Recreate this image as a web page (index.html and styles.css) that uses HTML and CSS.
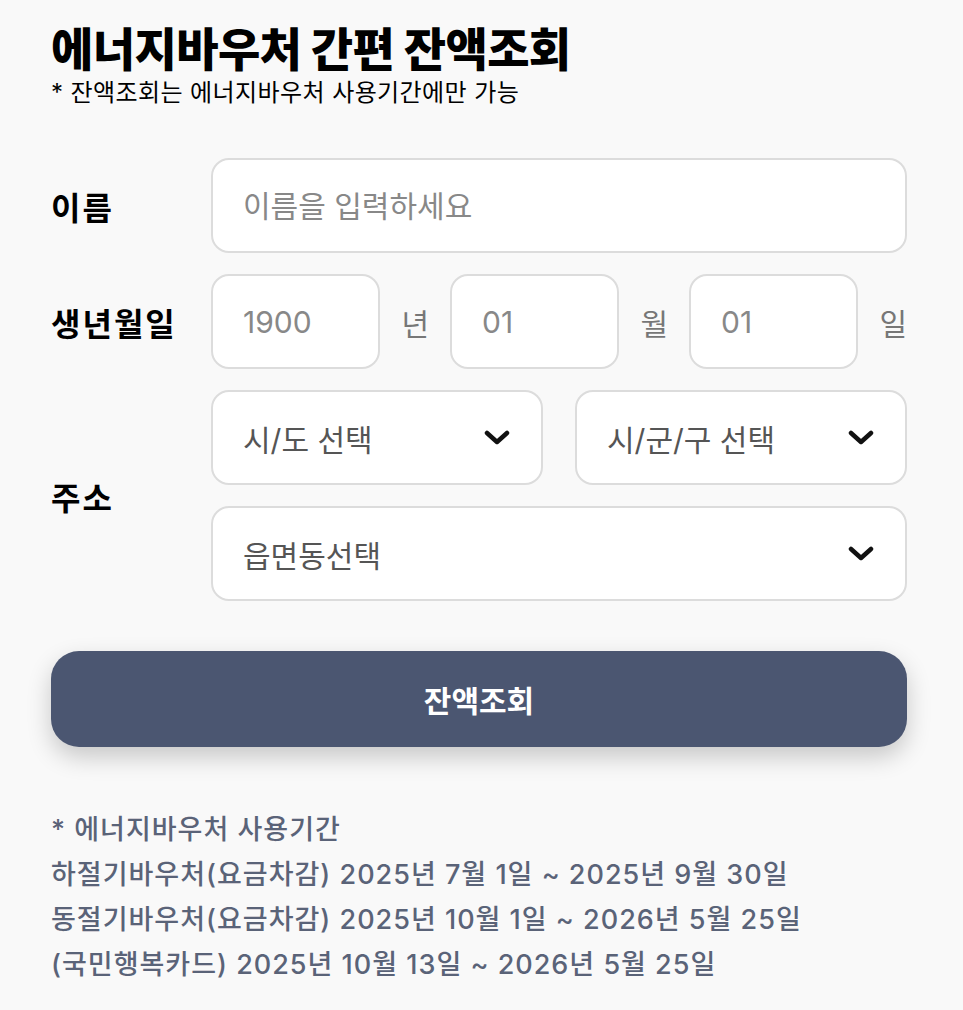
FILE: index.html
```html
<!DOCTYPE html>
<html lang="ko">
<head>
    <meta charset="UTF-8">
    <meta name="viewport" content="width=device-width, initial-scale=1.0">
    <title>에너지바우처 간편 잔액조회</title>
    <link rel="stylesheet" href="styles.css">
</head>
<body>
    <main class="page">
        <header class="header">
            <h1 class="title">에너지바우처 간편 잔액조회</h1>
            <p class="subtitle">* 잔액조회는 에너지바우처 사용기간에만 가능</p>
        </header>

        <form class="form">
            <div class="row">
                <label class="label" for="name">이름</label>
                <div class="fields">
                    <input class="input" id="name" type="text" placeholder="이름을 입력하세요">
                </div>
            </div>

            <div class="row">
                <span class="label">생년월일</span>
                <div class="fields birth">
                    <input class="input input-small" type="text" placeholder="1900">
                    <span class="unit">년</span>
                    <input class="input input-small" type="text" placeholder="01">
                    <span class="unit">월</span>
                    <input class="input input-small" type="text" placeholder="01">
                    <span class="unit">일</span>
                </div>
            </div>

            <div class="row">
                <span class="label">주소</span>
                <div class="fields address">
                    <div class="select">
                        <span>시/도 선택</span>
                        <svg class="chevron" viewBox="0 0 26 16"><path d="M3 3 L13 12 L23 3" /></svg>
                    </div>
                    <div class="select">
                        <span>시/군/구 선택</span>
                        <svg class="chevron" viewBox="0 0 26 16"><path d="M3 3 L13 12 L23 3" /></svg>
                    </div>
                    <div class="select select-wide">
                        <span>읍면동선택</span>
                        <svg class="chevron" viewBox="0 0 26 16"><path d="M3 3 L13 12 L23 3" /></svg>
                    </div>
                </div>
            </div>

            <button class="submit" type="button">잔액조회</button>
        </form>

        <section class="notes">
            <p>* 에너지바우처 사용기간</p>
            <p>하절기바우처(요금차감) 2025년 7월 1일 ~ 2025년 9월 30일</p>
            <p>동절기바우처(요금차감) 2025년 10월 1일 ~ 2026년 5월 25일</p>
            <p>(국민행복카드) 2025년 10월 13일 ~ 2026년 5월 25일</p>
        </section>
    </main>
</body>
</html>
```

FILE: styles.css
```css
* {
    margin: 0;
    padding: 0;
    box-sizing: border-box;
}

body {
    background-color: #f9f9f9;
    font-family: Inter, "Noto Sans CJK KR", "Noto Sans", sans-serif;
    color: #000;
}

.page {
    padding: 21px 56px 0 51px;
}

.title {
    font-size: 46px;
    font-weight: 800;
    line-height: 56px;
    letter-spacing: -0.6px;
}

.subtitle {
    font-size: 24px;
    line-height: 28px;
    margin-top: 2px;
    letter-spacing: 0.4px;
}

.form {
    margin-top: 51px;
    display: flex;
    flex-direction: column;
    gap: 21px;
}

.row {
    display: flex;
    align-items: center;
}

.label {
    width: 160px;
    flex-shrink: 0;
    font-size: 32px;
    font-weight: 700;
    letter-spacing: 2px;
}

.fields {
    flex: 1;
    display: flex;
}

.input {
    width: 100%;
    height: 95px;
    border: 2px solid #dcdcdc;
    border-radius: 18px;
    background: #fff;
    padding: 0 30px;
    font-family: inherit;
    font-size: 30px;
    color: #333;
    outline: none;
}

.input::placeholder {
    color: #888;
}

.birth {
    align-items: center;
    gap: 21px;
}

.input-small {
    flex: 1;
    min-width: 0;
}

.unit {
    flex-shrink: 0;
    font-size: 30px;
    color: #777;
}

.address {
    display: grid;
    grid-template-columns: 1fr 1fr;
    column-gap: 32px;
    row-gap: 21px;
}

.select {
    height: 95px;
    border: 2px solid #dcdcdc;
    border-radius: 18px;
    background: #fff;
    padding: 0 31px 0 30px;
    display: flex;
    align-items: center;
    justify-content: space-between;
    font-size: 30px;
    color: #555;
}

.select-wide {
    grid-column: 1 / 3;
}

.chevron {
    width: 26px;
    height: 16px;
    fill: none;
    stroke: #111;
    stroke-width: 4.5;
    stroke-linecap: round;
    stroke-linejoin: round;
}

.submit {
    margin-top: 29px;
    height: 96px;
    border: none;
    border-radius: 28px;
    background-color: #4b5671;
    color: #fff;
    font-family: inherit;
    font-size: 30px;
    font-weight: 700;
    box-shadow: 0 10px 24px rgba(0, 0, 0, 0.2);
    cursor: pointer;
}

.notes {
    margin-top: 60px;
    color: #5a6378;
    font-size: 27px;
    font-weight: 500;
    line-height: 45px;
    letter-spacing: 1px;
}
```
